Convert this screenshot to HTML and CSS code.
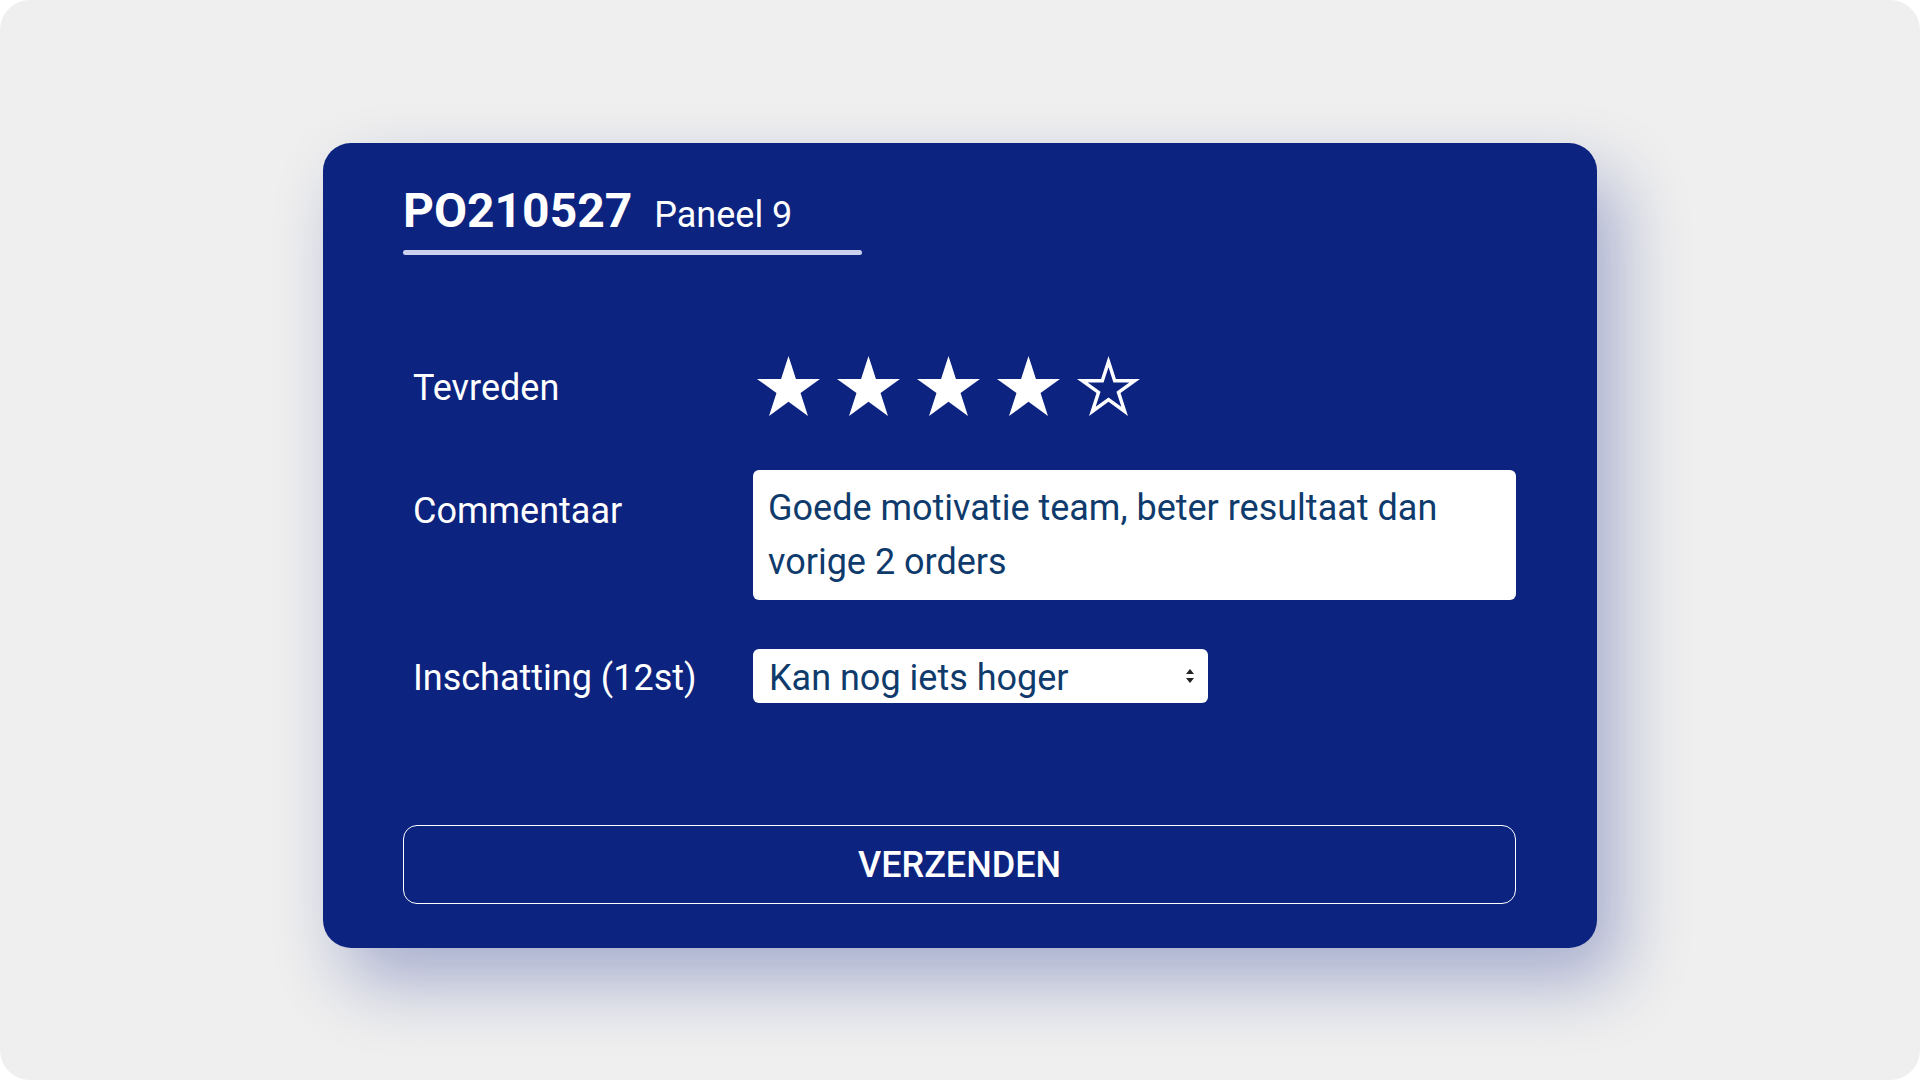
FILE: index.html
```html
<!DOCTYPE html>
<html lang="nl">
<head>
<meta charset="utf-8">
<title>PO210527 Paneel 9</title>
<link rel="stylesheet" href="styles.css">
</head>
<body>
<div class="screen">
  <form class="card">
    <div class="head">
      <div class="title-line">
        <h1 class="order">PO210527</h1>
        <span class="panel">Paneel 9</span>
      </div>
      <div class="underline"></div>
    </div>

    <div class="rows">
      <div class="row row-rating">
        <label class="label label-rating">Tevreden</label>
        <div class="stars">
          <svg class="star" viewBox="0 0 100 95.1" width="63" height="60"><polygon points="50,0 61.8,36.3 100,36.3 69.1,58.8 80.9,95.1 50,72.7 19.1,95.1 30.9,58.8 0,36.3 38.2,36.3" fill="#fff"/></svg>
          <svg class="star" viewBox="0 0 100 95.1" width="63" height="60"><polygon points="50,0 61.8,36.3 100,36.3 69.1,58.8 80.9,95.1 50,72.7 19.1,95.1 30.9,58.8 0,36.3 38.2,36.3" fill="#fff"/></svg>
          <svg class="star" viewBox="0 0 100 95.1" width="63" height="60"><polygon points="50,0 61.8,36.3 100,36.3 69.1,58.8 80.9,95.1 50,72.7 19.1,95.1 30.9,58.8 0,36.3 38.2,36.3" fill="#fff"/></svg>
          <svg class="star" viewBox="0 0 100 95.1" width="63" height="60"><polygon points="50,0 61.8,36.3 100,36.3 69.1,58.8 80.9,95.1 50,72.7 19.1,95.1 30.9,58.8 0,36.3 38.2,36.3" fill="#fff"/></svg>
          <svg class="star" viewBox="0 0 100 95.1" width="63" height="60"><path fill="#fff" fill-rule="evenodd" d="M50,0 L61.8,36.3 L100,36.3 L69.1,58.8 L80.9,95.1 L50,72.7 L19.1,95.1 L30.9,58.8 L0,36.3 L38.2,36.3 Z M50,17.9 L42.2,41.8 L17,41.8 L37.4,56.7 L29.6,80.6 L50,65.9 L70.4,80.6 L62.6,56.7 L83,41.8 L57.8,41.8 Z"/></svg>
        </div>
      </div>

      <div class="row row-comment">
        <label class="label label-comment" for="comment">Commentaar</label>
        <textarea id="comment" class="comment">Goede motivatie team, beter resultaat dan vorige 2 orders</textarea>
      </div>

      <div class="row row-estimate">
        <label class="label label-estimate" for="estimate">Inschatting (12st)</label>
        <div class="select-wrap">
          <select id="estimate" class="select">
            <option>Kan nog iets hoger</option>
          </select>
          <svg class="select-arrows" viewBox="0 0 8 14" width="8" height="14"><polygon points="4,0 8,5 0,5" fill="#222"/><polygon points="0,9 8,9 4,14" fill="#222"/></svg>
        </div>
      </div>
    </div>

    <button type="button" class="submit">VERZENDEN</button>
  </form>
</div>
</body>
</html>
```

FILE: styles.css
```css
* {
  box-sizing: border-box;
}

html, body {
  margin: 0;
  padding: 0;
  background: #ffffff;
}

body {
  font-family: Roboto, "Liberation Sans", Arial, sans-serif;
}

.screen {
  width: 1920px;
  height: 1080px;
  background: #efefef;
  border-radius: 30px;
  display: flex;
  align-items: center;
  justify-content: center;
  padding-top: 10px;
}

.card {
  width: 1274px;
  background: #0c2380;
  border-radius: 28px;
  padding: 40px 81px 44px 80px;
  box-shadow: 22px 34px 70px rgba(20, 40, 140, 0.33);
  color: #ffffff;
}

.head {
  width: 459px;
}

.title-line {
  display: flex;
  align-items: baseline;
  height: 56px;
  line-height: 56px;
}

.order {
  margin: 0;
  font-size: 48px;
  font-weight: 700;
  line-height: 56px;
}

.panel {
  font-size: 36px;
  font-weight: 400;
  margin-left: 22px;
}

.underline {
  margin-top: 11px;
  height: 5px;
  border-radius: 3px;
  background: #cdd1f0;
}

.rows {
  margin-top: 101px;
  display: flex;
  flex-direction: column;
}

.row {
  display: flex;
  align-items: flex-start;
}

.row-comment {
  margin-top: 54px;
}

.row-estimate {
  margin-top: 49px;
}

.label {
  width: 350px;
  flex: none;
  padding-left: 10px;
  font-size: 36px;
  line-height: 40px;
  color: #ffffff;
}

.label-rating {
  margin-top: 12px;
}

.label-comment {
  margin-top: 21px;
}

.label-estimate {
  margin-top: 9px;
}

.stars {
  display: flex;
  gap: 17px;
  margin-left: 4px;
  height: 60px;
}

.star {
  display: block;
}

.comment {
  width: 763px;
  height: 130px;
  padding: 11px 15px 10px 15px;
  border: none;
  border-radius: 6px;
  background: #ffffff;
  color: #0f3b6c;
  font-family: Roboto, "Liberation Sans", Arial, sans-serif;
  font-size: 36px;
  line-height: 54px;
  resize: none;
  overflow: hidden;
  outline: none;
  margin: 0;
}

.select-wrap {
  position: relative;
  width: 455px;
  height: 54px;
}

.select {
  appearance: none;
  -webkit-appearance: none;
  width: 100%;
  height: 54px;
  margin: 0;
  padding: 5px 40px 0 16px;
  border: none;
  border-radius: 6px;
  background: #ffffff;
  color: #0f3b6c;
  font-family: Roboto, "Liberation Sans", Arial, sans-serif;
  font-size: 36px;
  line-height: 49px;
  outline: none;
}

.select-arrows {
  position: absolute;
  right: 14px;
  top: 20px;
  pointer-events: none;
}

.submit {
  display: block;
  width: 100%;
  height: 79px;
  margin-top: 122px;
  background: transparent;
  border: 1px solid #ffffff;
  border-radius: 14px;
  color: #ffffff;
  font-family: Roboto, "Liberation Sans", Arial, sans-serif;
  font-size: 36px;
  font-weight: 500;
  cursor: pointer;
  padding: 2px 0 0 0;
}
```
